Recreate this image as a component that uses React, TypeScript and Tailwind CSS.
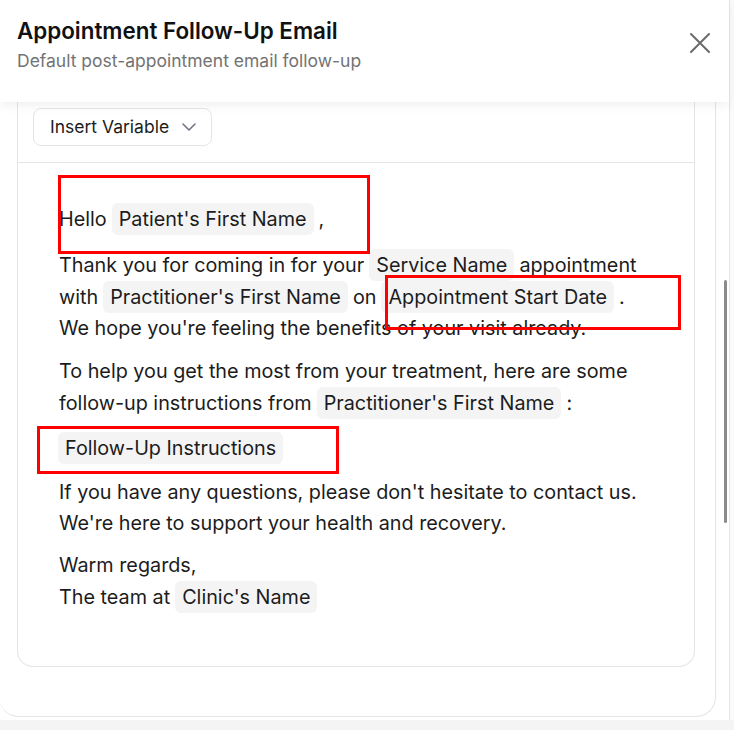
import React from 'react';

const Chip = ({ children }: { children: React.ReactNode }) => (
  <span className="inline-block h-8 leading-8 px-[7px] mx-[5px] rounded-md bg-[#f4f4f5] text-[#1c1c1c]">{children}</span>
);

const CloseIcon = () => (
  <svg width="22" height="22" viewBox="0 0 22 22" fill="none">
    <path d="M2 2L20 20M20 2L2 20" stroke="#6b6b6b" strokeWidth="2" strokeLinecap="round" />
  </svg>
);

const ChevronIcon = () => (
  <svg width="14" height="8" viewBox="0 0 14 8" fill="none">
    <path d="M1 1L7 7L13 1" stroke="#6b7280" strokeWidth="1.5" strokeLinecap="round" strokeLinejoin="round" />
  </svg>
);

export default function App() {
  return (
    <div className="relative w-[734px] h-[730px] overflow-hidden bg-[#f4f4f4] font-['Inter',sans-serif] text-[#1c1c1c]">
      <div className="flex h-[720px] bg-white">
        <div className="w-[729px] flex flex-col">
          {/* sticky header */}
          <div className="relative z-10 h-[102px] bg-white px-[17px] pt-[16px] flex justify-between shadow-[0_4px_10px_rgba(0,0,0,0.06)]">
            <div>
              <h2 className="text-[22.4px] leading-[30px] font-semibold text-[#111]">Appointment Follow-Up Email</h2>
              <p className="mt-[2px] text-[17.5px] leading-[26px] text-[#737373]">Default post-appointment email follow-up</p>
            </div>
            <button className="mt-[16px] mr-[1px] h-[22px]">
              <CloseIcon />
            </button>
          </div>

          {/* scrolled body */}
          <div className="-ml-px w-[717px] border-r border-b border-[#e5e5e5] rounded-b-[20px] pl-[18px] pr-[20px] pb-[49px]">
            <div className="border-x border-b border-[#e5e5e5] rounded-b-2xl">
              <div className="px-[15px] pt-[6px] pb-4 border-b border-[#e5e5e5]">
                <button className="h-[38px] pl-4 pr-[15px] flex items-center gap-[13px] rounded-lg border border-[#e5e5e5] text-[17.5px] text-[#1c1c1c]">
                  Insert Variable
                  <ChevronIcon />
                </button>
              </div>
              <div className="pl-[41px] pr-[48px] pt-[40px] pb-[53px] text-[19.8px] leading-[31px]">
                <p className="mb-[14px]">
                  Hello<Chip>Patient's First Name</Chip>,
                </p>
                <p className="mb-3">
                  Thank you for coming in for your<Chip>Service Name</Chip>appointment with<Chip>Practitioner's First Name</Chip>on<Chip>Appointment Start Date</Chip>. We hope you're feeling the benefits of your visit already.
                </p>
                <p className="mb-[13px]">
                  To help you get the most from your treatment, here are some follow-up instructions from<Chip>Practitioner's First Name</Chip>:
                </p>
                <p className="mb-[13px] -ml-[6px]">
                  <Chip>Follow-Up Instructions</Chip>
                </p>
                <p className="mb-[11px]">
                  If you have any questions, please don't hesitate to contact us. We're here to support your health and recovery.
                </p>
                <p>
                  Warm regards,
                  <br />
                  The team at<Chip>Clinic's Name</Chip>
                </p>
              </div>
            </div>
          </div>
        </div>
        <div className="flex-1 border-l border-[#e5e5e5] bg-[#fafafa]" />
      </div>

      {/* scrollbar thumb */}
      <div className="absolute left-[724px] top-[280px] w-[3px] h-[243px] rounded-full bg-[#8a8a8a]" />

      {/* red annotation boxes */}
      <div className="absolute left-[58px] top-[175px] w-[312px] h-[79px] border-[3px] border-[#ff0000]" />
      <div className="absolute left-[385px] top-[275px] w-[296px] h-[55px] border-[3px] border-[#ff0000]" />
      <div className="absolute left-[37px] top-[426px] w-[302px] h-[48px] border-[3px] border-[#ff0000]" />
    </div>
  );
}
